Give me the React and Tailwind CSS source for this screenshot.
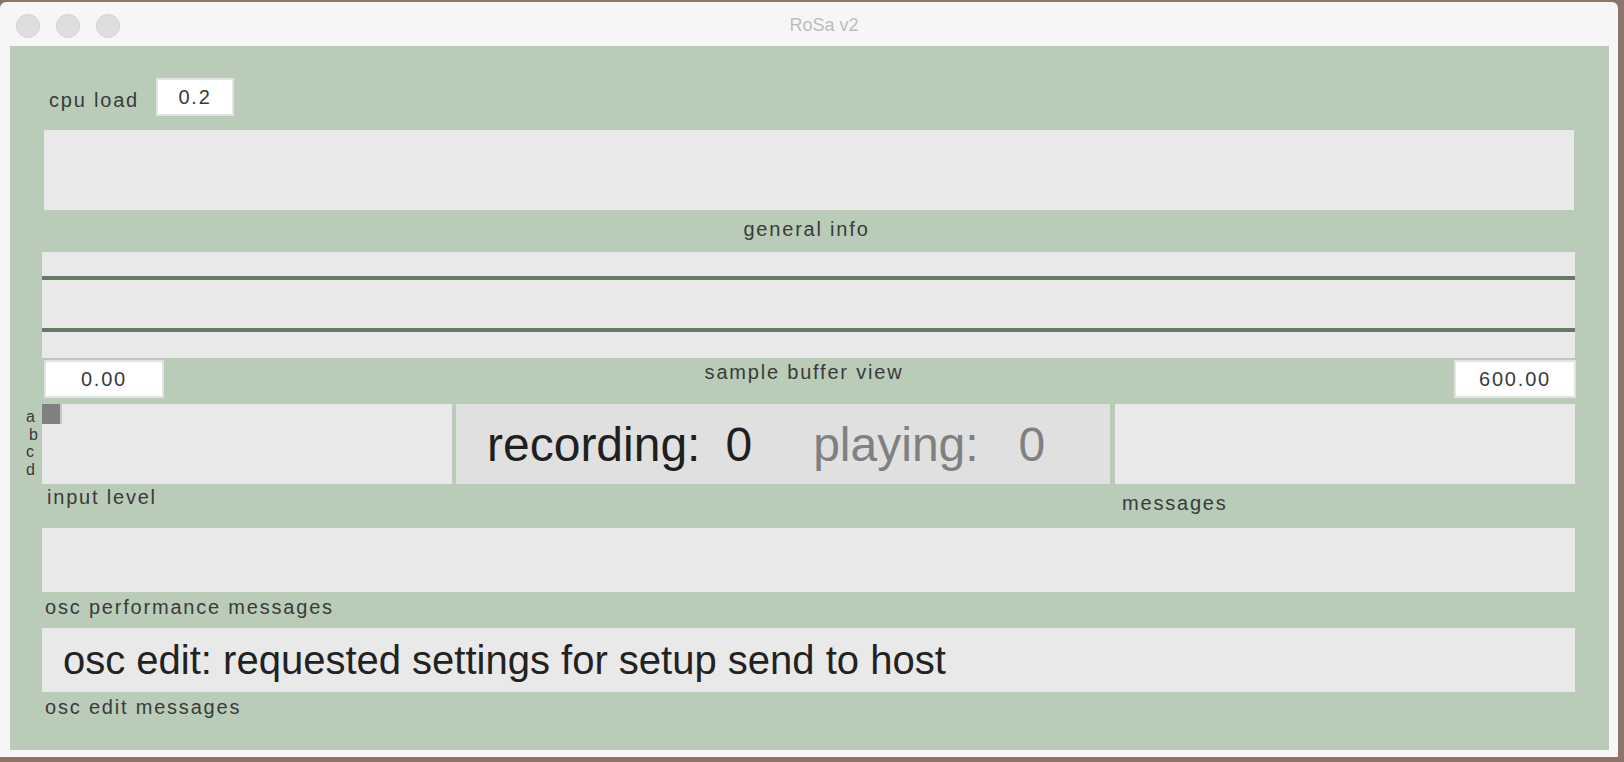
import React from 'react';

const label = "font-['Liberation_Sans',Arial,sans-serif] text-[20px] leading-[22px] tracking-[1.8px] text-[#3a3a3a]";

const NumBox = ({ value, className }) => (
    <div className={`h-[38px] border-2 border-[#e3e3e3] bg-white flex items-center justify-center ${label} ${className}`}>
        {value}
    </div>
);

const Caption = ({ children, className = '' }) => (
    <div className={`${label} ${className}`}>{children}</div>
);

const App = () => {
    return (
        <div className="w-[1624px] h-[762px] bg-[#8c7468] pt-[2px] pr-[6px] pb-[5px]">
            <div className="w-[1618px] h-full bg-[#f6f6f6] rounded-t-[6px] flex flex-col">
                {/* title bar */}
                <div className="h-[44px] shrink-0 grid grid-cols-[1fr_auto_1fr] items-center pt-[3px]">
                    <div className="flex gap-[16px] pl-[16px]">
                        <span className="w-[24px] h-[24px] rounded-full bg-[#dedede] border border-[#d2d2d2]" />
                        <span className="w-[24px] h-[24px] rounded-full bg-[#dedede] border border-[#d2d2d2]" />
                        <span className="w-[24px] h-[24px] rounded-full bg-[#dedede] border border-[#d2d2d2]" />
                    </div>
                    <div className="pl-[30px] font-['Liberation_Sans',Arial,sans-serif] text-[18px] text-[#bdbdbd]">RoSa v2</div>
                    <div />
                </div>

                {/* patcher */}
                <div className="flex-1 ml-[10px] mr-[9px] mb-[7px] bg-[#b9ccb8] pl-[32px] pr-[34px] flex flex-col">
                    {/* cpu load */}
                    <div className="mt-[32px] h-[38px] flex items-center">
                        <span className={`${label} w-[114px] pl-[7px] pt-[5px]`}>cpu load</span>
                        <NumBox value="0.2" className="w-[78px]" />
                    </div>

                    {/* general info */}
                    <div className="mt-[14px] ml-[2px] mr-[1px] h-[80px] bg-[#e9e9e9]" />
                    <div className="h-[42px] flex items-center justify-center">
                        <Caption className="-ml-[4px] -mt-[5px]">general info</Caption>
                    </div>

                    {/* sample buffer */}
                    <div className="h-[106px] bg-[#e9e9e9] flex flex-col">
                        <div className="mt-[24px] h-[4px] bg-[#637b64]" />
                        <div className="mt-[48px] h-[4px] bg-[#637b64]" />
                    </div>
                    <div className="mt-[2px] h-[38px] grid grid-cols-[auto_1fr_auto]">
                        <NumBox value="0.00" className="w-[120px] ml-[2px]" />
                        <Caption className="text-center mt-[1px] -ml-[10px]">sample buffer view</Caption>
                        <NumBox value="600.00" className="w-[122px] -mr-[1px]" />
                    </div>

                    {/* level / status / messages */}
                    <div className="mt-[6px] flex">
                        <div className="w-[410px] flex flex-col">
                            <div className="h-[80px] bg-[#e9e9e9] relative">
                                <div className="w-[20px] h-[20px] bg-[#c6c6c6]">
                                    <div className="w-[18px] h-[20px] bg-[#808080]" />
                                </div>
                                <div className="absolute -left-[16px] top-[4px] w-[14px] font-['Liberation_Sans',Arial,sans-serif] text-[16px] leading-[17.5px] text-[#3a3a3a]">
                                    <div>a</div>
                                    <div className="pl-[3px]">b</div>
                                    <div>c</div>
                                    <div>d</div>
                                </div>
                            </div>
                            <Caption className="pl-[5px] pt-[2px]">input level</Caption>
                        </div>
                        <div className="ml-[4px] w-[654px] h-[80px] bg-[#e0e0e0] flex items-center pl-[31px] pt-[2px] font-['Liberation_Sans',Arial,sans-serif] text-[48px] leading-none">
                            <span className="text-[#1f1f1f]">recording:</span>
                            <span className="ml-[25px] text-[#1f1f1f]">0</span>
                            <span className="ml-[61px] text-[#808080]">playing:</span>
                            <span className="ml-[40px] text-[#808080]">0</span>
                        </div>
                        <div className="ml-[5px] flex-1 flex flex-col">
                            <div className="h-[80px] bg-[#e9e9e9]" />
                            <Caption className="pl-[7px] pt-[8px]">messages</Caption>
                        </div>
                    </div>

                    {/* osc performance */}
                    <div className="mt-[auto] h-[64px] bg-[#e9e9e9]" />
                    <div className="h-[36px] flex items-center">
                        <Caption className="pl-[3px] -mt-[6px]">osc performance messages</Caption>
                    </div>

                    {/* osc edit */}
                    <div className="h-[64px] bg-[#e9e9e9] flex items-center pl-[21px] font-['Liberation_Sans',Arial,sans-serif] text-[40px] leading-none text-[#222222]">
                        osc edit: requested settings for setup send to host
                    </div>
                    <Caption className="pl-[3px] pt-[4px] h-[58px]">osc edit messages</Caption>
                </div>
            </div>
        </div>
    );
};

export default App;
